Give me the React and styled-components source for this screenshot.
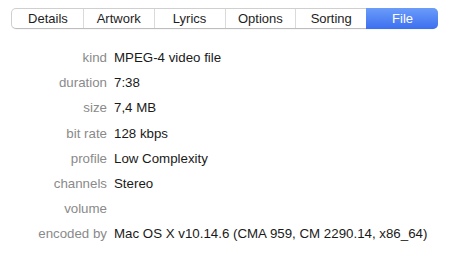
import React from "react";
import styled, { createGlobalStyle } from "styled-components";

const GlobalStyle = createGlobalStyle`
  html, body {
    margin: 0;
    padding: 0;
    background: #ffffff;
  }
  body {
    font-family: "Liberation Sans", Arial, sans-serif;
  }
`;

const Window = styled.div`
  width: 451px;
  height: 256px;
  box-sizing: border-box;
  padding: 8px 13px 0 11px;
  background: #ffffff;
`;

const TabBar = styled.div`
  display: grid;
  grid-template-columns: repeat(6, 1fr);
  height: 21px;
  box-sizing: border-box;
  border: 1px solid #cfcfcf;
  border-bottom-color: #bdbdbd;
  border-radius: 5px;
  background: #ffffff;
  box-shadow: 0 0.5px 0.5px rgba(0, 0, 0, 0.06);
`;

const Tab = styled.div`
  display: flex;
  align-items: center;
  justify-content: center;
  font-size: 13px;
  color: ${props => (props.selected ? "#ffffff" : "#1e1e1e")};
  font-weight: ${props => (props.selected ? 500 : 400)};
  border-left: 1px solid ${props => (props.first || props.selected ? "transparent" : "#dadada")};
  background: ${props => (props.selected ? "linear-gradient(#6b9cf9, #3c6ff0)" : "transparent")};
  margin: ${props => (props.selected ? "-1px -1px -1px 0" : "0")};
  border-radius: ${props => (props.selected ? "0 5px 5px 0" : "0")};
`;

const Fields = styled.div`
  display: grid;
  grid-template-columns: 96px auto;
  column-gap: 7px;
  grid-auto-rows: 25.2px;
  align-items: center;
  margin-top: 16px;
  font-size: 13.3px;
`;

const Label = styled.div`
  text-align: right;
  color: #8a8a8a;
`;

const Value = styled.div`
  color: #1a1a1a;
  white-space: nowrap;
`;

const tabs = ["Details", "Artwork", "Lyrics", "Options", "Sorting", "File"];

const fields = [
  ["kind", "MPEG-4 video file"],
  ["duration", "7:38"],
  ["size", "7,4 MB"],
  ["bit rate", "128 kbps"],
  ["profile", "Low Complexity"],
  ["channels", "Stereo"],
  ["volume", ""],
  ["encoded by", "Mac OS X v10.14.6 (CMA 959, CM 2290.14, x86_64)"]
];

export default function App() {
  return (
    <>
      <GlobalStyle />
      <Window>
        <TabBar>
          {tabs.map((t, i) => (
            <Tab key={t} first={i === 0} selected={t === "File"}>
              {t}
            </Tab>
          ))}
        </TabBar>
        <Fields>
          {fields.map(([label, value]) => (
            <React.Fragment key={label}>
              <Label>{label}</Label>
              <Value>{value}</Value>
            </React.Fragment>
          ))}
        </Fields>
      </Window>
    </>
  );
}
